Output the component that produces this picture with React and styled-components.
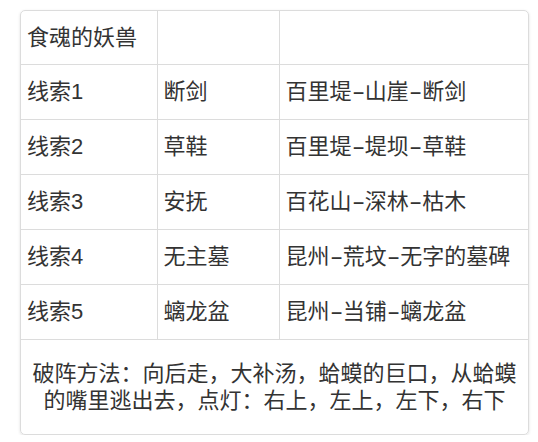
import React from "react"
import styled, { createGlobalStyle } from "styled-components"

const GlobalStyle = createGlobalStyle`
  html, body {
    margin: 0;
    background: #fff;
  }
  body {
    font-family: "Liberation Sans", "Noto Sans CJK SC", sans-serif;
    color: #333;
  }
`

const Page = styled.div`
  padding: 10px 9px 0 20px;
`

const Frame = styled.div`
  width: 509px;
  border: 1px solid #dcdcdc;
  border-radius: 5px;
  overflow: hidden;
  box-shadow: 0 1px 3px rgba(0, 0, 0, 0.12);
  box-sizing: border-box;
`

const Table = styled.table`
  width: 100%;
  border-collapse: collapse;
  table-layout: fixed;
`

const Row = styled.tr`
  height: ${(p) => p.$h || 54}px;
`

const Cell = styled.td`
  padding: 0 6px;
  font-size: 22px;
  line-height: 27px;
  vertical-align: middle;
  text-align: ${(p) => (p.$center ? "center" : "left")};
  white-space: ${(p) => (p.$center ? "normal" : "nowrap")};
  border-bottom: ${(p) => (p.$last ? "none" : "1px solid #dcdcdc")};
  & + & {
    border-left: 1px solid #dcdcdc;
  }
`

const Dash = styled.span`
  display: inline-block;
  margin: 0 3px;
  transform: scaleX(1.8);
`

const rows = [
  ["线索1", "断剑", "百里堤-山崖-断剑"],
  ["线索2", "草鞋", "百里堤-堤坝-草鞋"],
  ["线索3", "安抚", "百花山-深林-枯木"],
  ["线索4", "无主墓", "昆州-荒坟-无字的墓碑"],
  ["线索5", "螭龙盆", "昆州-当铺-螭龙盆"],
]

function Route({ text }) {
  const parts = text.split("-")
  return parts.map((p, i) => (
    <React.Fragment key={i}>
      {i > 0 && <Dash>-</Dash>}
      {p}
    </React.Fragment>
  ))
}

export default function App() {
  return (
    <Page>
      <GlobalStyle />
      <Frame>
        <Table>
          <colgroup>
            <col style={{ width: 136 }} />
            <col style={{ width: 122 }} />
            <col />
          </colgroup>
          <tbody>
            <Row $h={53}>
              <Cell>食魂的妖兽</Cell>
              <Cell />
              <Cell />
            </Row>
            {rows.map((r) => (
              <Row key={r[0]} $h={55}>
                <Cell>{r[0]}</Cell>
                <Cell>{r[1]}</Cell>
                <Cell>
                  <Route text={r[2]} />
                </Cell>
              </Row>
            ))}
            <Row $h={95}>
              <Cell colSpan={3} $center $last>
                破阵方法：向后走，大补汤，蛤蟆的巨口，从蛤蟆
                <br />
                的嘴里逃出去，点灯：右上，左上，左下，右下
              </Cell>
            </Row>
          </tbody>
        </Table>
      </Frame>
    </Page>
  )
}
